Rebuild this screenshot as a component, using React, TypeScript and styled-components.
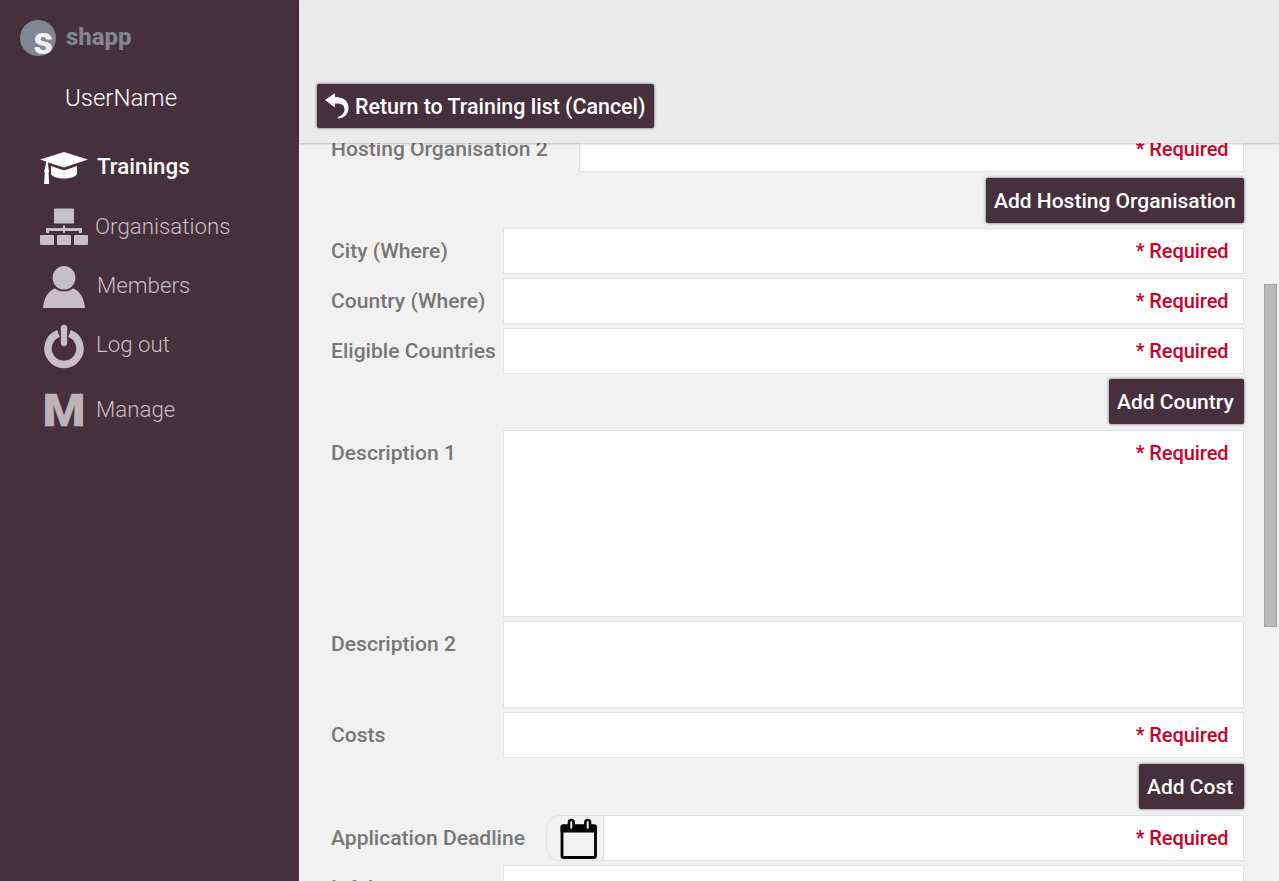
import React from "react";
import styled, { createGlobalStyle, css } from "styled-components";

const Global = createGlobalStyle`
  * { box-sizing: border-box; }
  body { margin: 0; overflow: hidden; background: #f1f1f1; font-family: Roboto, "Liberation Sans", sans-serif; }
`;

const Page = styled.div`
  display: flex;
  width: 1279px;
  height: 881px;
  overflow: hidden;
`;

const Sidebar = styled.aside`
  width: 299px;
  flex: none;
  background: #46303b;
`;

const Brand = styled.div`
  display: flex;
  align-items: center;
  height: 36px;
  margin: 20px 0 0 20px;
  gap: 10px;
`;

const LogoMark = styled.div`
  display: flex;
  justify-content: flex-end;
  width: 36px;
  height: 36px;
  padding: 8px 3px 0 0;
  border-radius: 50%;
  background: #828690;
  color: #f0f1f4;
  font-size: 38px;
  font-weight: 800;
  line-height: 26px;
`;

const BrandName = styled.div`
  color: #828690;
  font-size: 24px;
  font-weight: 800;
  line-height: 34px;
  padding-bottom: 2px;
`;

const UserName = styled.div`
  margin: 26px 0 0 65px;
  color: #fff;
  font-size: 24px;
  font-weight: 300;
  line-height: 32px;
`;

const Nav = styled.nav`
  display: flex;
  flex-direction: column;
  margin-top: 23px;
`;

const NavItem = styled.a<{ $active?: boolean; $height: number; $gap: number }>`
  display: flex;
  align-items: center;
  height: ${(p) => p.$height}px;
  padding-left: 40px;
  gap: ${(p) => p.$gap}px;
  color: #c7bfc3;
  font-size: 22.3px;
  font-weight: 300;
  ${(p) => p.$active && css`
    color: #fff;
    font-weight: 500;
  `}
  svg { display: block; flex: none; }
`;

const NavText = styled.span<{ $lift?: number }>`
  padding-bottom: ${(p) => p.$lift ?? 2}px;
`;

const Main = styled.main`
  flex: 1;
  min-width: 0;
  display: flex;
  flex-direction: column;
  background: #f1f1f1;
`;

const Header = styled.header`
  flex: none;
  height: 143px;
  padding: 84px 0 0 18px;
  background: #ebebeb;
  box-shadow: 0 1px 2px rgba(0, 0, 0, 0.22);
  z-index: 1;
`;

const Button = styled.button<{ $width: number }>`
  display: flex;
  align-items: center;
  width: ${(p) => p.$width}px;
  height: 45px;
  padding: 1px 0 0 8px;
  border: 0;
  border-radius: 2px;
  background: #46303b;
  box-shadow: 0 0 3px rgba(0, 0, 0, 0.65);
  color: #fff;
  font: 500 21px Roboto, "Liberation Sans", sans-serif;
  white-space: nowrap;
`;

const ReturnButton = styled(Button)`
  height: 44px;
  padding-top: 0;
  gap: 6px;
  font-size: 21.4px;
  svg { margin-bottom: 1px; }
`;

const Viewport = styled.div`
  display: flex;
  flex: 1;
  min-height: 0;
  overflow: hidden;
`;

const Form = styled.div`
  display: flex;
  flex-direction: column;
  width: 945px;
  margin-top: -17px;
  padding-left: 32px;
  flex: none;
`;

const Row = styled.div`
  display: flex;
  flex: none;
  justify-content: space-between;
  margin-bottom: 4px;
`;

const Label = styled.label`
  color: #777;
  font-size: 21.08px;
  font-weight: 500;
  line-height: 46px;
  white-space: nowrap;
`;

const Field = styled.div<{ $width: number; $height?: number }>`
  display: flex;
  justify-content: flex-end;
  width: ${(p) => p.$width}px;
  height: ${(p) => p.$height ?? 46}px;
  padding-right: 14.5px;
  border: 1px solid #e3e3e3;
  background: #fff;
  color: #cc0029;
  font-size: 20px;
  font-weight: 500;
  letter-spacing: -0.07px;
  line-height: 44px;
`;

const Actions = styled.div<{ $height?: number; $top?: number }>`
  display: flex;
  flex: none;
  justify-content: flex-end;
  height: ${(p) => p.$height ?? 52}px;
  padding-top: ${(p) => p.$top ?? 2}px;
`;

const DateGroup = styled.div`
  display: flex;
`;

const DateButton = styled.div`
  display: flex;
  align-items: center;
  justify-content: flex-end;
  width: 57px;
  height: 46px;
  padding: 1px 5px 0 0;
  border: 1px solid #e3e3e3;
  border-right: 0;
  border-radius: 14px 0 0 14px;
`;

const ScrollTrack = styled.div`
  width: 15px;
  margin-left: auto;
  padding: 141px 2px 0 0;
`;

const ScrollThumb = styled.div`
  height: 343px;
  border: 1px solid #a4a4a4;
  background: #bababa;
`;

const required = "* Required";

const CapIcon = () => (
  <svg width="48" height="33" viewBox="0 0 48 33" fill="currentColor">
    <path d="M24 1 48 8.500 24 16.500 8 11.500 8.600 18.500l.5 1.500-.5 1.500.5 11.500H4.200l.5-11.500-.6-1.500.6-1.500L6.200 10.500 0 8.500Z" />
    <path d="M11 15 24 19.500l13-4.500v8c-3 6-23 6-26 0Z" />
  </svg>
);

const OrgIcon = () => (
  <svg width="48" height="38" viewBox="0 0 48 38" fill="currentColor">
    <rect x="14" y="0.5" width="20" height="15" rx="1" />
    <rect x="0" y="27" width="14" height="10" rx="1" />
    <rect x="17" y="27" width="14" height="10" rx="1" />
    <rect x="34" y="27" width="14" height="10" rx="1" />
    <path d="M23 17.500h2V20h17v5h-3v-2H25V25h-2v-2H9V25H6v-5h17Z" />
  </svg>
);

const MemberIcon = () => (
  <svg width="48" height="42" viewBox="0 0 48 42" fill="currentColor">
    <ellipse cx="24" cy="11.800" rx="11.400" ry="11.800" />
    <path d="M3 42c1-10 5-17 11.500-19.500q9.500 6 19 0C40 25 44 32 45 42Z" />
  </svg>
);

const PowerIcon = () => (
  <svg width="48" height="45" viewBox="0 0 48 45" fill="none" stroke="currentColor">
    <path d="M18.500 9.500a16 16 0 1 0 11 0" strokeWidth="7.500" />
    <path d="M24 4v15" strokeWidth="6.300" strokeLinecap="round" />
  </svg>
);

const ManageMark = styled.span`
  display: flex;
  justify-content: center;
  width: 48px;
  padding-top: 2px;
  color: #bdb3b9;
  font-size: 45px;
  font-weight: 900;
  line-height: 40px;
  transform: scaleX(1.08);
  -webkit-text-stroke: 0.5px #bdb3b9;
`;

const ReturnIcon = () => (
  <svg width="24" height="26" viewBox="0 0 24 26" fill="currentColor">
    <path d="M0 7 10 0V4C20 4 23.500 9 23.500 15 23.500 21 19 25.500 13 25.500L12.500 24C17 22.500 19.500 20 19.500 16.500 19.500 12 16 10 10 10.500V14.500Z" />
  </svg>
);

const CalendarIcon = () => (
  <svg width="38" height="41" viewBox="0 0 38 41">
    <rect x="2" y="8" width="33.500" height="31.500" rx="1.500" fill="none" stroke="#000" strokeWidth="2.800" />
    <path d="M.6 14.500V8.500q0-2 2-2h32.300q2 0 2 2v6Z" fill="#000" />
    <rect x="9" y="2" width="4.600" height="10" rx="2.200" fill="#f1f1f1" stroke="#000" strokeWidth="2.600" />
    <rect x="25.400" y="2" width="4.600" height="10" rx="2.200" fill="#f1f1f1" stroke="#000" strokeWidth="2.600" />
  </svg>
);

export default function App() {
  return (
    <Page>
      <Global />
      <Sidebar>
        <Brand>
          <LogoMark>s</LogoMark>
          <BrandName>shapp</BrandName>
        </Brand>
        <UserName>UserName</UserName>
        <Nav>
          <NavItem $active $height={60} $gap={9}><CapIcon /><NavText>Trainings</NavText></NavItem>
          <NavItem $height={60} $gap={7}><OrgIcon /><NavText>Organisations</NavText></NavItem>
          <NavItem $height={59} $gap={9}><MemberIcon /><NavText $lift={4}>Members</NavText></NavItem>
          <NavItem $height={60} $gap={8}><PowerIcon /><NavText $lift={4}>Log out</NavText></NavItem>
          <NavItem $height={68} $gap={8}><ManageMark>M</ManageMark><NavText>Manage</NavText></NavItem>
        </Nav>
      </Sidebar>
      <Main>
        <Header>
          <ReturnButton $width={337}><ReturnIcon />Return to Training list (Cancel)</ReturnButton>
        </Header>
        <Viewport>
          <Form>
            <Row><Label>Hosting Organisation 2</Label><Field $width={665}>{required}</Field></Row>
            <Actions><Button $width={258}>Add Hosting Organisation</Button></Actions>
            <Row><Label>City (Where)</Label><Field $width={741}>{required}</Field></Row>
            <Row><Label>Country (Where)</Label><Field $width={741}>{required}</Field></Row>
            <Row><Label>Eligible Countries</Label><Field $width={741}>{required}</Field></Row>
            <Actions $top={1}><Button $width={135}>Add Country</Button></Actions>
            <Row><Label>Description 1</Label><Field $width={741} $height={187}>{required}</Field></Row>
            <Row><Label>Description 2</Label><Field $width={741} $height={87} /></Row>
            <Row><Label>Costs</Label><Field $width={741}>{required}</Field></Row>
            <Actions $height={53}><Button $width={105}>Add Cost</Button></Actions>
            <Row>
              <Label>Application Deadline</Label>
              <DateGroup>
                <DateButton><CalendarIcon /></DateButton>
                <Field $width={641}>{required}</Field>
              </DateGroup>
            </Row>
            <Row><Label>Infobox</Label><Field $width={741} /></Row>
          </Form>
          <ScrollTrack><ScrollThumb /></ScrollTrack>
        </Viewport>
      </Main>
    </Page>
  );
}
